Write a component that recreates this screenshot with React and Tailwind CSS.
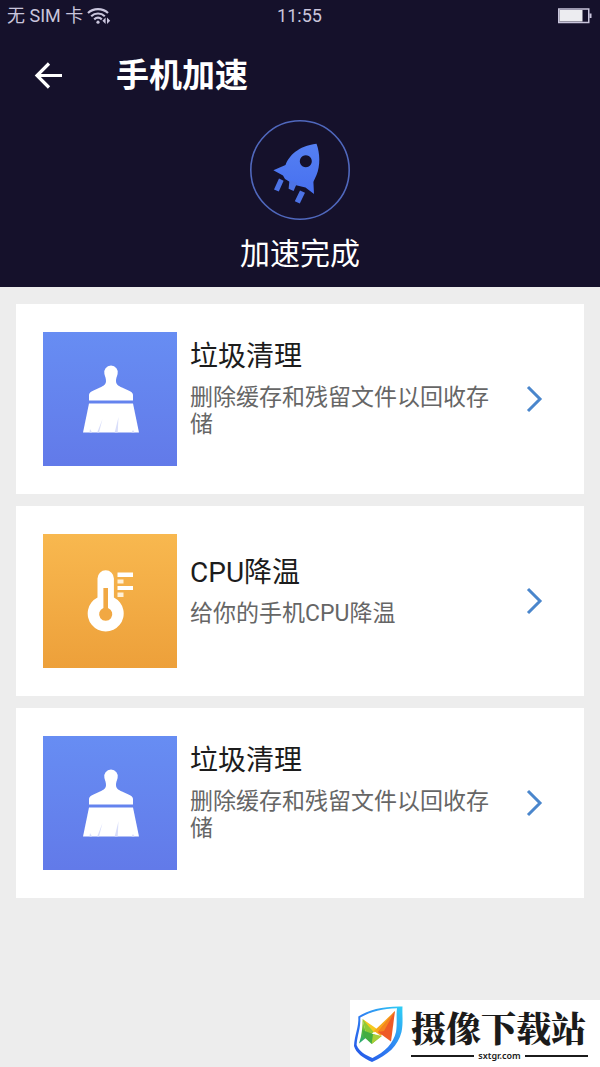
const cards = [
  { id: 1, icon: "broom", title: "垃圾清理", desc: "删除缓存和残留文件以回收存储" },
  { id: 2, icon: "thermo", title: "CPU降温", desc: "给你的手机CPU降温" },
  { id: 3, icon: "broom", title: "垃圾清理", desc: "删除缓存和残留文件以回收存储" },
];

function WifiIcon() {
  return (
    <svg viewBox="0 0 24 18" className="w-6 h-[18px]" fill="none" stroke="currentColor" strokeWidth="2.2">
      <path d="M1 6C6.5 0.8 15.500 0.8 21 6" />
      <path d="M4.200 9.200C8 5.600 14 5.600 17.800 9.200" />
      <path d="M7.200 12.400C9.500 10.200 12.500 10.200 14.800 12.400" />
      <circle cx="11" cy="15.200" r="1.600" fill="currentColor" stroke="none" />
      <path d="M18.600 10.600v6.400l-3.200-3.200zM20 10.600v6.400l3.200-3.200z" fill="currentColor" stroke="none" />
    </svg>
  );
}

function BatteryIcon() {
  return (
    <svg viewBox="0 0 34 16" className="w-[34px] h-4" fill="none">
      <rect x="0.75" y="1" width="30" height="13.5" stroke="#c9c5dc" strokeWidth="1.5" />
      <rect x="1.5" y="2" width="23" height="11.5" fill="#ececf0" />
      <rect x="31.5" y="5.5" width="2" height="4.5" fill="#c9c5dc" />
    </svg>
  );
}

function RocketIcon() {
  return (
    <svg viewBox="0 0 100 100" className="size-[100px]">
      <defs>
        <linearGradient id="rocket" x1="0" y1="0" x2="0" y2="1">
          <stop offset="0" stopColor="#5580f2" />
          <stop offset="1" stopColor="#4770f0" />
        </linearGradient>
      </defs>
      <circle cx="50" cy="50" r="49.2" fill="none" stroke="#5068bd" strokeWidth="1.6" />
      <path
        fill="url(#rocket)"
        fillRule="evenodd"
        d="M66.500 23.800C70 33 70.500 46 66.500 55C65.300 58 64 60 63.400 62L64 74L55.500 67.500L45 65L35 59L33 55.500L23.400 50.200L35.500 45C39 36 48 26 66.500 23.800ZM55.800 35.200a6 6 0 1 0 0.010 0Z"
      />
      <path fill="#4d73e6" d="M29 58.600l4.600 2.200-4.800 10.600-4.800-2zM39.500 60l7.500 3-3.400 8-5-2.200zM50 70.600l5 2.200-5.200 10.800-5-2.400z" />
    </svg>
  );
}

function BroomIcon() {
  return (
    <svg viewBox="0 0 60 72" className="w-[60px] h-[72px]" fill="#fff">
      <path d="M31 2.500a6.800 6.800 0 0 1 6.600 8.600C36.800 14 36 15.500 36 18C36 21.500 38.500 23 42 24.500L48.500 27.500C51.500 29 53 30 53 32V37.500H9V32C9 30 10.500 29 13.500 27.500L20 24.500C23.500 23 26 21.500 26 18C26 15.500 25.200 14 24.400 11.100A6.800 6.800 0 0 1 31 2.500Z" />
      <path d="M9 40.600H53L59 69.500H3Z" />
      <path d="M22.500 56l-3.500 13.500h-1.800zM38.500 54l-0.800 15.500h-3zM10 66l2 3.500H9.500zM53 67l1.500 2.500h-3z" fill="#d9defa" />
    </svg>
  );
}

function ThermoIcon() {
  return (
    <svg viewBox="0 0 60 72" className="w-[60px] h-[72px]" fill="none">
      <path d="M17.500 13.500a8.200 8.200 0 0 1 16.400 0V32.500A18 18 0 1 1 17.500 32.500Z" fill="#fff" />
      <path d="M23.400 23h4.600V43a6.600 6.600 0 1 1-4.600 0Z" fill="#f1a843" />
      <path d="M37.500 7.500h15.500v4.500H37.500zM37.500 21h15.500v4H37.500z" fill="#fff" />
      <path d="M37.500 14.500h6v4h-6zM37.500 27.500h6v4.500h-6z" fill="#fff0d6" />
    </svg>
  );
}

function Card({ item }) {
  const isBroom = item.icon === "broom";
  return (
    <a href="#" className="flex items-center bg-white px-[27px] py-7">
      <div
        className={`flex size-[134px] shrink-0 items-center justify-center bg-linear-to-b ${
          isBroom ? "from-[#678df3] to-[#627ae9]" : "from-[#f8b84f] to-[#eda03a]"
        }`}
      >
        {isBroom ? <BroomIcon /> : <ThermoIcon />}
      </div>
      <div className="ml-[13px] min-w-0 flex-1 pb-6">
        <h2 className="text-[28px] leading-[42px] text-[#1c1c1c]">{item.title}</h2>
        <p className="mt-1.5 text-[23px] leading-[27px] text-[#666]">{item.desc}</p>
      </div>
      <svg viewBox="0 0 18 28" className="ml-4 mr-3.5 h-7 w-[18px] shrink-0" fill="none" stroke="#4a86cc" strokeWidth="3">
        <path d="M3 2L15 14L3 26" />
      </svg>
    </a>
  );
}

// logo kanan bawah
function SiteBadge() {
  return (
    <div className="fixed bottom-0 right-0 flex h-[67px] w-[250px] items-center bg-white pl-1 text-[#1b1b1b]">
      <svg viewBox="0 0 50 58" className="h-[58px] w-[50px] shrink-0">
        <defs>
          <linearGradient id="shield" x1="0" y1="1" x2="1" y2="0">
            <stop offset="0" stopColor="#2453e6" />
            <stop offset="0.5" stopColor="#2f80f2" />
            <stop offset="1" stopColor="#2fd0f5" />
          </linearGradient>
          <linearGradient id="leaf" x1="0" y1="0" x2="0" y2="1">
            <stop offset="0" stopColor="#c4d42c" />
            <stop offset="0.5" stopColor="#5dbb3a" />
            <stop offset="1" stopColor="#1fa67c" />
          </linearGradient>
        </defs>
        <path
          fill="url(#shield)"
          fillRule="evenodd"
          d="M4.300 11.500C15 4.500 30 1 48.500 1.500C48 9 49.500 18 47.500 27C44 41 34 50 18 57C9 53 2 48 0 41C0.500 30 5 22 4.300 11.500ZM6.300 12.500C7 23 3 31 2.600 40C5 46 11 50 18.500 53C31 47 39.500 38 42 27C43.500 19 42 10 43 3.200C29 3.500 17 6.500 6.300 12.500Z"
        />
        <path d="M8.500 14L13 32L5 38.500C8 30 8.500 22 8.500 14Z" fill="url(#leaf)" />
        <path d="M8.500 14L22 25L13 33Z" fill="#8fca35" />
        <path d="M8.500 14L24.500 25L20 27.500Z" fill="#f6c91f" />
        <path d="M8 25L19 29L26 32L17.700 39L10 32Z" fill="#43ad41" />
        <path d="M19 29L28 31L17.700 39Z" fill="#a9cf36" />
        <path d="M41 6L20 26L27 31Z" fill="#f8a51d" />
        <path d="M41 6L24 27L37 36.500Z" fill="#ee5a26" />
        <path d="M41 6L30 26L24 27Z" fill="#f5841f" />
      </svg>
      <div className="ml-[7px] flex flex-1 flex-col pr-3">
        <p className="whitespace-nowrap font-['Noto_Serif_CJK_SC','Noto_Sans_CJK_SC',serif] text-[35px] font-black leading-[44px]">
          摄像下载站
        </p>
        <div className="flex items-center gap-1">
          <span className="h-[2px] flex-1 bg-[#1b1b1b]" />
          <span className="font-['Noto_Sans',sans-serif] text-[9px] font-semibold leading-[14px]">sxtgr.com</span>
          <span className="h-[2px] flex-1 bg-[#1b1b1b]" />
        </div>
      </div>
    </div>
  );
}

export default function App() {
  return (
    <div className="min-h-screen bg-[#ededed] font-['Roboto','Noto_Sans_CJK_SC',sans-serif]">
      <header className="bg-[#15112b] pb-3 text-white">
        {/* STATUS BAR */}
        <div className="grid h-8 grid-cols-3 items-center pl-[7px] pr-2 text-lg text-[#c9c5dc]">
          <div className="flex items-center gap-1 whitespace-nowrap">
            <span>无 SIM 卡</span>
            <WifiIcon />
          </div>
          <span className="text-center">11:55</span>
          <div className="flex justify-end">
            <BatteryIcon />
          </div>
        </div>

        {/* TITLE */}
        <div className="flex h-[88px] items-center pl-[34px]">
          <button type="button" aria-label="返回" className="w-[82px]">
            <svg viewBox="0 0 28 28" className="size-7" fill="none" stroke="#fff" strokeWidth="3.2">
              <path d="M28 13.500H3M15 1.500L3 13.500L15 25.500" />
            </svg>
          </button>
          <h1 className="text-[33px] font-bold leading-[48px]">手机加速</h1>
        </div>

        <div className="flex flex-col items-center">
          <RocketIcon />
          <p className="mt-3 text-[30px] leading-[43px]">加速完成</p>
        </div>
      </header>

      <main className="flex flex-col gap-3 px-4 py-[17px]">
        {cards.map((item) => (
          <Card key={item.id} item={item} />
        ))}
      </main>

      <SiteBadge />
    </div>
  );
}
